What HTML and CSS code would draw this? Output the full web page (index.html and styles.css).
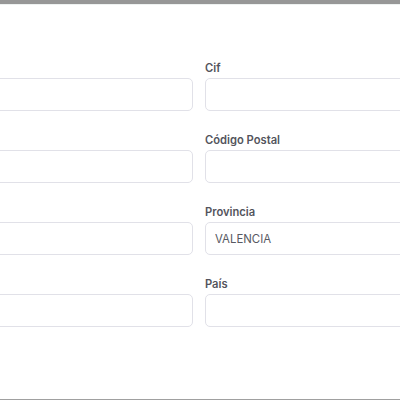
FILE: index.html
```html
<!DOCTYPE html>
<html lang="es">
<head>
<meta charset="utf-8">
<link rel="stylesheet" href="styles.css">
</head>
<body>
<div class="topbar"></div>
<div class="topline"></div>
<main class="content">
  <form class="form-grid">
    <div class="field"><span class="label"></span><input class="input" type="text" aria-label="Nombre"></div>
    <div class="field"><label class="label">Cif</label><input class="input" type="text"></div>
    <div class="field"><span class="label"></span><input class="input" type="text" aria-label="Dirección"></div>
    <div class="field"><label class="label">Código Postal</label><input class="input" type="text"></div>
    <div class="field"><span class="label"></span><input class="input" type="text" aria-label="Población"></div>
    <div class="field"><label class="label">Provincia</label><input class="input" type="text" value="VALENCIA"></div>
    <div class="field"><span class="label"></span><input class="input" type="text" aria-label="Teléfono"></div>
    <div class="field"><label class="label">País</label><input class="input" type="text"></div>
  </form>
</main>
<div class="bottomline"></div>
</body>
</html>
```
FILE: styles.css
```css
html, body {
  margin: 0;
  padding: 0;
  background: #ffffff;
  overflow: hidden;
  width: 400px;
  height: 400px;
}
body {
  display: flex;
  flex-direction: column;
  font-family: Inter, "Open Sans", sans-serif;
}
.topbar {
  height: 4px;
  background: #979797;
  flex: none;
}
.topline {
  height: 1px;
  background: #eef2f1;
  flex: none;
}
.content {
  flex: 1;
  padding-top: 56px;
}
.form-grid {
  margin: 0 0 0 -200px;
  display: grid;
  grid-template-columns: 393px 393px;
  column-gap: 12px;
  row-gap: 22px;
}
.field {
  display: flex;
  flex-direction: column;
  gap: 3px;
}
.label {
  display: block;
  height: 14px;
  line-height: 14px;
  font-size: 11.2px;
  font-weight: 600;
  color: #53545c;
}
.input {
  box-sizing: border-box;
  height: 33px;
  margin: 0;
  border: 1px solid #e1e1e8;
  border-radius: 5px;
  background: #ffffff;
  padding: 0 9px;
  font-family: Inter, "Open Sans", sans-serif;
  font-size: 11.4px;
  color: #575962;
  outline: none;
}
.bottomline {
  height: 1px;
  background: #a0a0a0;
  flex: none;
}
```
